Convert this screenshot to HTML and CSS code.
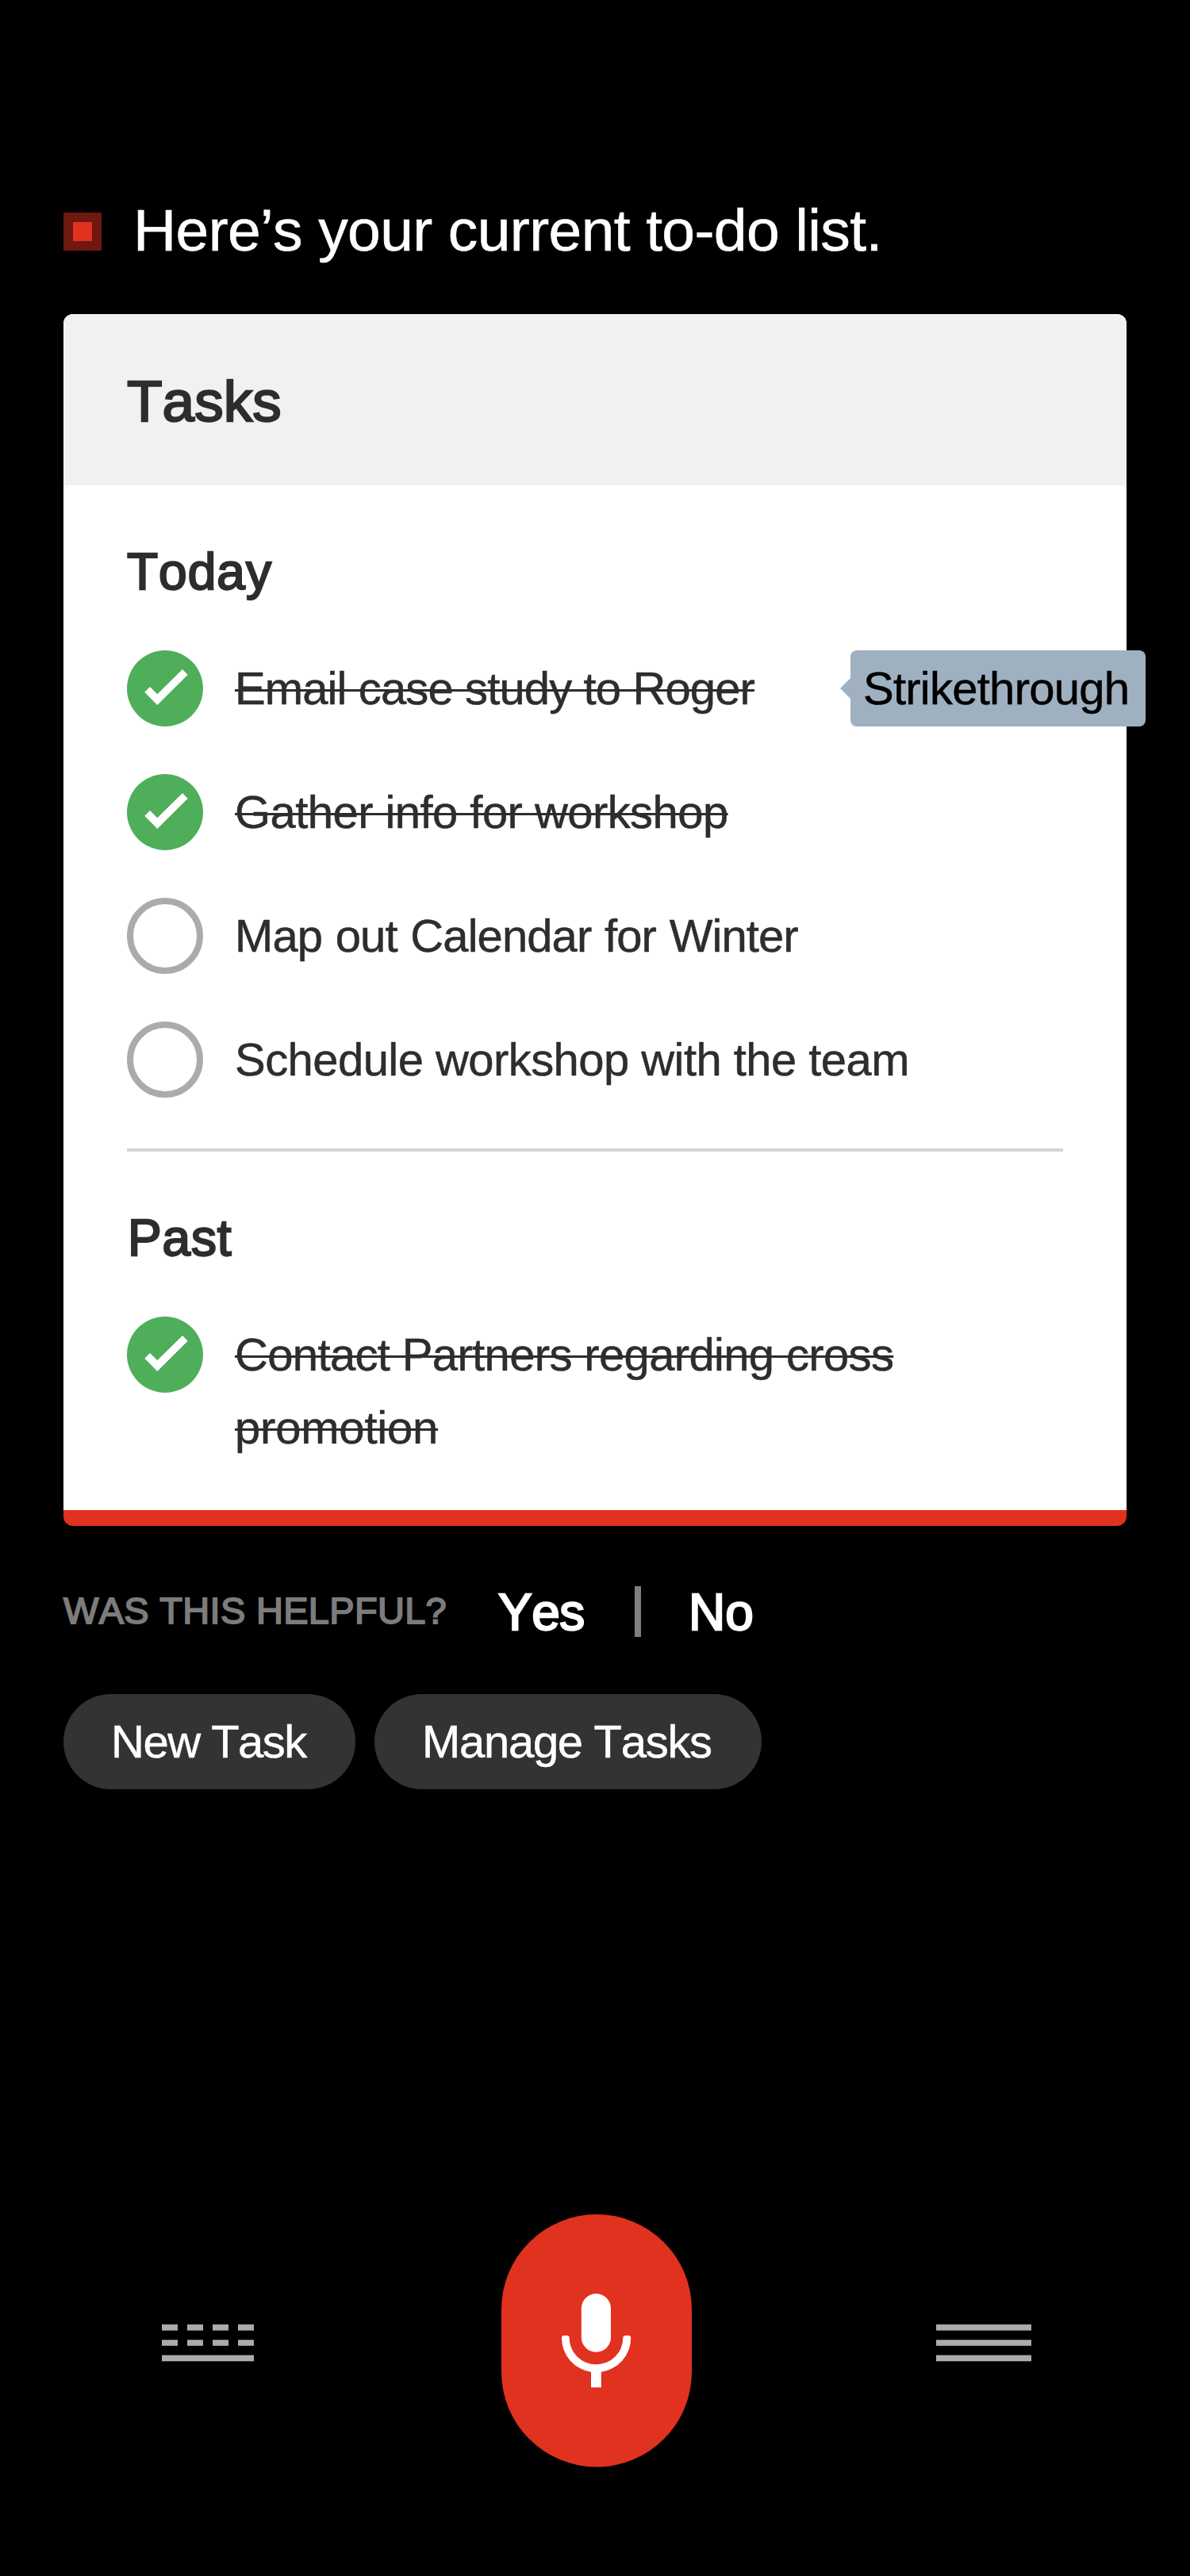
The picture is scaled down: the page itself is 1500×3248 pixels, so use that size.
FILE: index.html
```html
<!DOCTYPE html>
<html lang="en">
<head>
<meta charset="utf-8">
<title>Tasks</title>
<link rel="stylesheet" href="styles.css">
</head>
<body>
<main class="screen">
  <header class="greeting">
    <span class="marker"></span>
    <h1 class="greeting-text">Here’s your current to-do list.</h1>
  </header>

  <section class="card">
    <div class="card-header"><h2 class="card-title">Tasks</h2></div>
    <div class="card-body">
      <h3 class="group-title">Today</h3>
      <ul class="tasks">
        <li class="task">
          <svg class="check" viewBox="0 0 96 96"><circle cx="48" cy="48" r="48"/><path d="M22.3 52.7 29 46l9.3 9.3L70 24l6.7 6.7L38.3 69z"/></svg>
          <span class="task-text done email">Email case study to Roger</span>
          <span class="tooltip">Strikethrough</span>
        </li>
        <li class="task">
          <svg class="check" viewBox="0 0 96 96"><circle cx="48" cy="48" r="48"/><path d="M22.3 52.7 29 46l9.3 9.3L70 24l6.7 6.7L38.3 69z"/></svg>
          <span class="task-text done">Gather info for workshop</span>
        </li>
        <li class="task">
          <span class="ring"></span>
          <span class="task-text calendar">Map out Calendar for Winter</span>
        </li>
        <li class="task">
          <span class="ring"></span>
          <span class="task-text">Schedule workshop with the team</span>
        </li>
      </ul>
      <hr class="divider">
      <h3 class="group-title past">Past</h3>
      <ul class="tasks">
        <li class="task">
          <svg class="check" viewBox="0 0 96 96"><circle cx="48" cy="48" r="48"/><path d="M22.3 52.7 29 46l9.3 9.3L70 24l6.7 6.7L38.3 69z"/></svg>
          <span class="task-text done partners">Contact Partners regarding cross<br><span class="last-line">promotion</span></span>
        </li>
      </ul>
    </div>
  </section>

  <div class="feedback">
    <span class="feedback-label">WAS THIS HELPFUL?</span>
    <span class="answer yes">Yes</span>
    <span class="bar"></span>
    <span class="answer">No</span>
  </div>

  <div class="chips">
    <span class="chip new-task">New Task</span>
    <span class="chip manage">Manage Tasks</span>
  </div>

  <nav class="dock">
    <svg class="dock-icon" width="116" height="48" viewBox="0 0 116 48">
      <path d="M0 .8h20v7.7H0zM32 .8h20v7.7H32zM64 .8h20v7.7H64zM96 .8h20v7.7H96zM0 20.15h20v7.7H0zM32 20.15h20v7.7H32zM64 20.15h20v7.7H64zM96 20.15h20v7.7H96zM0 39.5h116v7.7H0z"/>
    </svg>
    <svg class="mic" width="240" height="319" viewBox="0 0 240 319">
      <rect class="mic-bg" width="240" height="318.5" rx="120"/>
      <rect x="100.8" y="100" width="37.2" height="73.7" rx="18.6"/>
      <path d="M76 156a3.3 3.3 0 0 1 3.3-3.3h3.1a3.3 3.3 0 0 1 3.3 3.3A33.8 33.2 0 0 0 153.3 156a3.3 3.3 0 0 1 3.3-3.3h3.3a3.3 3.3 0 0 1 3.3 3.3A43.6 43.2 0 0 1 125.8 198.7V218.3H113V198.7A43.6 43.2 0 0 1 76 156z"/>
    </svg>
    <svg class="dock-icon" width="120" height="48" viewBox="0 0 120 48">
      <path d="M0 .8h120v7.7H0zM0 20.15h120v7.7H0zM0 39.5h120v7.7H0z"/>
    </svg>
  </nav>
</main>
</body>
</html>
```
FILE: styles.css
```css
* {
  box-sizing: border-box;
  margin: 0;
  padding: 0;
}

body {
  background: #000;
  color: #fff;
  font-family: "Liberation Sans", Arial, sans-serif;
  font-kerning: none;
}

.screen {
  width: 1500px;
  height: 3248px;
  padding: 242px 80px 0;
}

/* Assistant greeting */
.greeting {
  display: flex;
  align-items: center;
  gap: 40px;
  height: 100px;
}

.marker {
  width: 48px;
  height: 48px;
  border: 12px solid #6f180f;
  background: #e1311f;
}

.greeting-text {
  padding-bottom: 4px;
  font-size: 75px;
  font-weight: 400;
  letter-spacing: -0.62px;
  white-space: nowrap;
  -webkit-text-stroke: 0.6px currentColor;
}

/* Task card */
.card {
  margin-top: 54px;
  width: 1340px;
  border-radius: 12px;
  border-bottom: 20px solid #e1311f;
  background: #fff;
  color: #2d2d2d;
}

.card-header {
  display: flex;
  align-items: center;
  height: 216px;
  padding: 3px 80px 0;
  border-radius: 12px 12px 0 0;
  background: #f1f1f1;
}

.card-title,
.group-title,
.answer {
  font-weight: 400;
  -webkit-text-stroke: 2.3px currentColor;
}

.card-title {
  font-size: 73px;
}

.card-body {
  padding: 69px 80px 58px;
}

.group-title {
  margin-bottom: 59px;
  font-size: 64px;
  line-height: 80px;
  letter-spacing: 1px;
}

.group-title.past {
  padding-left: 1px;
  letter-spacing: 0.8px;
}

.tasks {
  display: flex;
  flex-direction: column;
  gap: 60px;
  list-style: none;
}

.task {
  position: relative;
  display: flex;
  align-items: flex-start;
  gap: 40px;
}

.check {
  flex: none;
  width: 96px;
  height: 96px;
  fill: #fff;
}

.check circle {
  fill: #4fae59;
}

.ring {
  flex: none;
  width: 96px;
  height: 96px;
  border: 8px solid #ababab;
  border-radius: 50%;
}

.task-text {
  padding-top: 2px;
  font-size: 58px;
  line-height: 92px;
  letter-spacing: -0.56px;
  white-space: nowrap;
  -webkit-text-stroke: 0.5px currentColor;
}

.email {
  letter-spacing: -0.88px;
}

.calendar {
  letter-spacing: -0.92px;
  word-spacing: 1.5px;
}

.partners {
  letter-spacing: -0.65px;
}

.last-line {
  letter-spacing: -0.2px;
}

.done {
  text-decoration: line-through 3px;
}

.tooltip {
  position: absolute;
  left: 912px;
  top: 0;
  width: 372px;
  height: 96px;
  padding: 2px 0 0 16px;
  border-radius: 8px;
  background: #9fb1c1;
  color: #000;
  font-size: 58px;
  line-height: 92px;
  letter-spacing: -0.75px;
  -webkit-text-stroke: 0.5px currentColor;
}

.tooltip::before {
  content: "";
  position: absolute;
  left: -13px;
  top: 35px;
  border: 13px solid transparent;
  border-left-width: 0;
  border-right-color: #9fb1c1;
}

.divider {
  height: 4px;
  margin: 64px 0 69px;
  border: 0;
  background: #d4d4d4;
}

/* Feedback */
.feedback {
  display: flex;
  height: 64px;
  margin-top: 76px;
  line-height: 64px;
}

.feedback-label {
  width: 548px;
  margin-top: -1px;
  color: #7c7c7c;
  font-size: 47px;
  letter-spacing: 0.3px;
  -webkit-text-stroke: 1.8px currentColor;
}

.answer {
  margin-top: 1px;
  font-size: 64px;
}

.yes {
  width: 172px;
  letter-spacing: -0.5px;
}

.bar {
  width: 8px;
  margin-right: 60px;
  background: #7f7f7f;
}

/* Suggestions */
.chips {
  display: flex;
  gap: 24px;
  margin-top: 72px;
}

.chip {
  height: 120px;
  padding-left: 60px;
  border-radius: 60px;
  background: #333;
  font-size: 58px;
  line-height: 120px;
  white-space: nowrap;
  -webkit-text-stroke: 0.5px currentColor;
}

.new-task {
  width: 368px;
  letter-spacing: -1.5px;
}

.manage {
  width: 488px;
  letter-spacing: -1.3px;
}

/* Bottom controls */
.dock {
  display: flex;
  align-items: flex-start;
  margin-top: 536px;
  padding-left: 124px;
}

.dock-icon {
  margin-top: 138px;
  fill: #ababab;
}

.mic {
  margin: 0 308px 0 312px;
  fill: #fff;
}

.mic-bg {
  fill: #e1311f;
}
```
